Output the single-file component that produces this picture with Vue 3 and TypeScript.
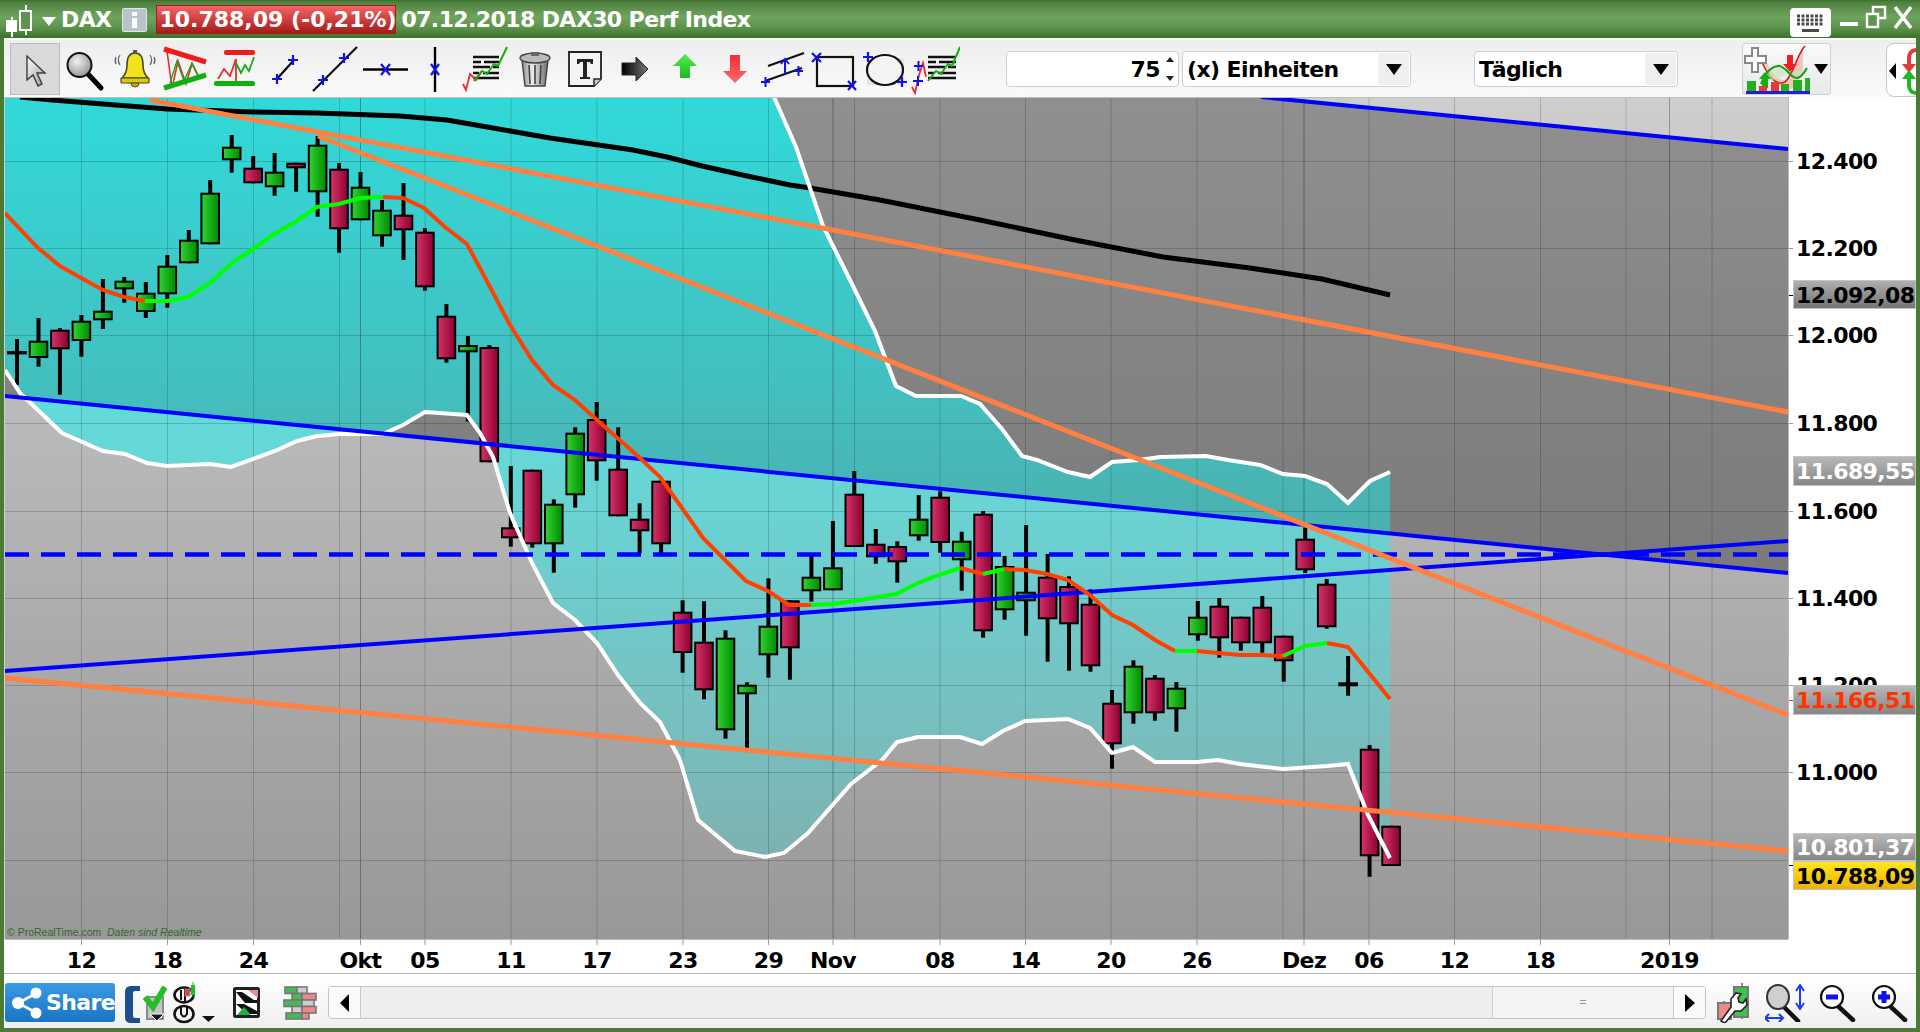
<script setup lang="ts">
type Candle = [number, number, number, number, 'g' | 'r' | 'k'];
type Seg = { color: string; pts: number[][] };

const X0 = 17;
const STEP = 21.47;

// high, body top, body bottom, low, colour
const raw: Candle[] = [
  [339, 351, 354.4, 385, 'k'], [318, 340.7, 358, 366.7, 'g'], [328, 329.7, 349.3, 394.7, 'r'], [315, 320.7, 341, 356.7, 'g'],
  [279, 310.7, 320.3, 329, 'g'], [277, 280.7, 289.3, 302.7, 'g'], [282, 292.7, 312, 318, 'g'], [255, 265.7, 294.3, 307.7, 'g'],
  [230, 239.7, 263.3, 263.3, 'g'], [180, 192.7, 244.3, 244.3, 'g'], [135, 146.7, 160.3, 172.7, 'g'], [156, 167.7, 183.3, 183.3, 'r'],
  [153, 171.7, 187.3, 195.7, 'g'], [162.7, 162.7, 168.3, 191.7, 'r'], [136, 144.7, 192.3, 216.7, 'g'], [163, 168.7, 229.3, 252.7, 'r'],
  [172, 186.7, 220.3, 220.3, 'g'], [200, 209.7, 236.3, 246.7, 'g'], [183, 214.7, 230.3, 260, 'r'], [228, 231.7, 287.3, 290.7, 'r'],
  [304, 315.7, 359.3, 362.7, 'r'], [336, 345, 352.3, 421.7, 'g'], [345, 347, 462.3, 462.3, 'r'], [466, 527.3, 538.3, 546.7, 'r'],
  [469.7, 469.7, 544.3, 547.7, 'r'], [499.3, 503.7, 544.3, 572.7, 'g'], [427.3, 432.7, 495.3, 507.7, 'g'], [402, 419, 461.3, 480.7, 'r'],
  [427.3, 468.7, 516.3, 516.3, 'r'], [503.3, 518.7, 531.3, 553.3, 'r'], [480.7, 480.7, 544.3, 553, 'r'], [600.3, 611.7, 653, 672.7, 'r'],
  [601.3, 641.7, 690.3, 699.3, 'r'], [630.3, 637.7, 730.3, 738.7, 'g'], [682.3, 684.7, 694.3, 748.3, 'g'], [578.3, 625.7, 655.3, 677.7, 'g'],
  [600.3, 600.3, 648.3, 679.7, 'r'], [556, 576.7, 591.3, 601.7, 'g'], [521, 567.3, 590.3, 590.3, 'g'], [471, 493.7, 547, 547, 'r'],
  [529, 543.7, 557.3, 563.7, 'r'], [541.3, 546, 562.3, 582.7, 'r'], [495, 518.7, 536.3, 540.7, 'g'], [491.3, 496.7, 543, 552.7, 'r'],
  [531.7, 540.7, 560.3, 590.7, 'g'], [511, 513.7, 631.3, 637.7, 'r'], [556, 566, 610.3, 619.7, 'g'], [525, 591.7, 601.3, 635.7, 'g'],
  [554, 576.7, 619.3, 661.7, 'r'], [576.3, 586, 624.3, 670.7, 'r'], [589.3, 603.7, 666.3, 671.7, 'r'], [690, 702.7, 744.3, 768.7, 'r'],
  [660.3, 665.7, 713.3, 723.7, 'g'], [675, 677.7, 713.3, 720.7, 'r'], [682, 687.7, 709.3, 731.7, 'g'], [601, 616.7, 635.3, 640.7, 'g'],
  [598, 605.7, 638.3, 657.7, 'r'], [616.7, 616.7, 643.3, 650.7, 'r'], [596, 606.7, 643.3, 652.7, 'r'], [635.7, 635.7, 661.3, 681.7, 'r'],
  [527.3, 538.7, 570.3, 573, 'r'], [579, 583.7, 627.3, 628.7, 'r'], [656, 682.3, 686.3, 695.7, 'r'], [745, 748.7, 856.3, 876.7, 'r'],
  [825.7, 825.7, 866, 866, 'r'],
];
const candles = raw.map((c, i) => ({
  x: +(X0 + STEP * i).toFixed(1), hi: c[0], top: c[1], bot: c[2], lo: c[3], kind: c[4],
}));

const upper: number[][] = [[774,97],[796,147],[823,226],[851,282],[875,331],[896,386],[916,396],[961,396],[980,404],[1002,429],[1022,456],[1037,460],[1068,472],[1090,477],[1112,462],[1139,460],[1160,457],[1206,456],[1228,460],[1260,465],[1283,474],[1305,476],[1327,484],[1348,503],[1370,481],[1390,472]];
const lower: number[][] = [[5,370],[20,393],[62,433],[103,451],[125,454],[147,463],[167,466],[210,464],[231,467],[275,451],[297,441],[317,436],[340,434],[383,434],[403,425],[425,412],[467,415],[480,433],[493,457],[510,513],[532,563],[553,603],[575,620],[597,643],[618,675],[640,703],[660,722],[680,760],[698,820],[735,851],[765,857],[784,853],[808,833],[851,784],[882,760],[897,742],[918,737],[960,737],[982,744],[1003,731],[1025,721],[1068,719],[1090,728],[1112,753],[1133,747],[1155,762],[1197,762],[1218,760],[1240,764],[1283,769],[1327,766],[1348,764],[1368,815],[1390,858]];
const str = (p: number[][]) => p.map((a) => a.join(',')).join(' ');
const upperPts = str(upper);
const lowerPts = str(lower);
const bandPts = str([[5, 97], ...upper, ...[...lower].reverse()]);
const blackPts = str([[20,97],[52,100],[167,109],[253,112],[317,113],[400,116],[447,120],[493,128],[550,138],[633,150],[667,157],[702,166],[747,176],[790,185],[810,188],[880,200],[980,220],[1075,240],[1163,257],[1250,268],[1322,279],[1390,295]]);

const R = '#ff4000';
const G = '#00ff00';
const ma: Seg[] = [
  { color: R, pts: [[5,213],[37,247],[60,266],[83,279],[103,290],[124,297],[145,301]] },
  { color: G, pts: [[145,301],[167,301],[188,297],[210,283],[232,263],[253,249],[274,234],[295,222],[317,207],[339,204],[360,198],[383,197]] },
  { color: R, pts: [[383,197],[403,198],[424,208],[445,227],[467,244],[489,285],[510,325],[532,360],[553,385],[575,400],[597,420],[640,458],[660,477],[682,508],[703,538],[725,560],[746,581],[768,591],[789,605],[811,605]] },
  { color: G, pts: [[811,605],[832,604],[854,601],[896,594],[918,583],[939,575],[960,568]] },
  { color: R, pts: [[960,568],[983,574]] },
  { color: G, pts: [[983,574],[1004,569]] },
  { color: R, pts: [[1004,569],[1025,570],[1047,574],[1068,580],[1090,595],[1112,615],[1133,625],[1155,640],[1175,651]] },
  { color: G, pts: [[1175,651],[1197,651]] },
  { color: R, pts: [[1197,651],[1218,653],[1240,655],[1261,655],[1283,656]] },
  { color: G, pts: [[1283,656],[1305,646],[1327,643]] },
  { color: R, pts: [[1327,643],[1348,647],[1390,699]] },
];
const maLines = ma.map((s) => ({ color: s.color, pts: str(s.pts) }));

const gridY = [161, 248, 335, 423, 511, 598, 685, 772, 860];
const gridX = [81.5, 167.5, 253.5, 339.5, 425, 511, 597, 683, 768.5, 854.5, 940, 1025.5, 1111, 1197, 1283, 1369, 1454.5, 1540.5, 1626, 1712];
const monthX = [360.5, 833, 1304, 1669.5];

const timeLabels: [string, number][] = [['12',81.5],['18',167.5],['24',253.5],['Okt',360.5],['05',425],['11',511],['17',597],['23',683],['29',768.5],['Nov',833],['08',940],['14',1025.5],['20',1111],['26',1197],['Dez',1304],['06',1369],['12',1454.5],['18',1540.5],['2019',1669.5]];
const priceLabels: [string, number][] = [['12.400',161],['12.200',248],['12.000',335],['11.800',423],['11.600',511],['11.400',598],['11.200',685],['11.000',772]];
const tags = [
  { text: '12.092,08', y: 280, h: 29, fill: 'url(#tagDark)', cls: 'tag-k', tick: 295, tickColor: '#000' },
  { text: '11.689,55', y: 456, h: 30, fill: 'url(#tagLight)', cls: 'tag-w', tick: 0, tickColor: '' },
  { text: '11.166,51', y: 685, h: 30, fill: 'url(#tagLight)', cls: 'tag-r', tick: 700, tickColor: '#ff3300' },
  { text: '10.801,37', y: 833, h: 28, fill: 'url(#tagLight)', cls: 'tag-w', tick: 0, tickColor: '' },
  { text: '10.788,09', y: 861, h: 29, fill: 'url(#tagYellow)', cls: 'tag-k', tick: 865, tickColor: '#000' },
];
</script>

<template>
  <div class="app">
    <header class="titlebar">
      <svg class="t-candle" width="33" height="32" viewBox="0 0 33 32">
        <path d="M7 12v20M21 0v30" stroke="#fff" stroke-width="2" />
        <rect x="1" y="15" width="11" height="12" fill="#fff" />
        <rect x="15" y="6" width="11" height="19" fill="#5e9450" stroke="#fff" stroke-width="2" />
      </svg>
      <svg class="t-drop" width="14" height="9" viewBox="0 0 14 9"><path d="M0 0h14L7 9z" fill="#fff" /></svg>
      <span class="t-sym">DAX</span>
      <svg class="t-info" width="25" height="24" viewBox="0 0 25 24">
        <rect x="0.5" y="0.5" width="24" height="23" rx="1" fill="#b9c3cc" stroke="#dfe5ea" />
        <rect x="10" y="4" width="5" height="4" fill="#fff" />
        <rect x="10" y="10" width="5" height="10" fill="#fff" />
      </svg>
      <span class="t-price">10.788,09 (-0,21%)</span>
      <span class="t-name">07.12.2018 DAX30 Perf Index</span>
      <span class="t-spacer"></span>
      <svg class="t-kbd" width="41" height="29" viewBox="0 0 41 29">
        <rect width="41" height="29" rx="4" fill="#fff" />
        <path d="M7 8h27M7 12h27M7 16h27" stroke="#4a4a4a" stroke-width="3" stroke-dasharray="3 1.5" />
        <rect x="12" y="21" width="17" height="3" fill="#4a4a4a" />
      </svg>
      <svg class="t-win" width="76" height="30" viewBox="0 0 76 30">
        <rect x="0" y="17" width="18" height="4" fill="#fff" />
        <rect x="33" y="2" width="12" height="11" fill="none" stroke="#fff" stroke-width="2.4" />
        <rect x="27" y="9" width="11" height="13" fill="#5e9450" stroke="#fff" stroke-width="2.4" />
        <path d="M55 2l16 21M71 2L55 23" stroke="#fff" stroke-width="3.6" />
      </svg>
    </header>

    <section class="toolbar">
      <div class="tools">
        <span class="tool active">
          <svg width="50" height="52" viewBox="0 0 50 52"><defs><linearGradient id="ptr" x1="0" y1="0" x2="1" y2="1"><stop offset="0" stop-color="#fff" /><stop offset="1" stop-color="#9a9a9a" /></linearGradient></defs><path d="M17 13v24l6-5 5 11 4-2-5-11h8z" fill="url(#ptr)" stroke="#3c3c3c" stroke-width="1.4" /></svg>
        </span>
        <span class="tool">
          <svg width="50" height="52" viewBox="0 0 50 52"><defs><radialGradient id="lens" cx=".4" cy=".35" r=".7"><stop offset="0" stop-color="#f2f2f2" /><stop offset="1" stop-color="#8e8e8e" /></radialGradient></defs><path d="M28 31l13 14" stroke="#000" stroke-width="5" stroke-linecap="round" /><circle cx="19.5" cy="22" r="12" fill="url(#lens)" stroke="#111" stroke-width="2" /></svg>
        </span>
        <span class="tool">
          <svg width="50" height="52" viewBox="0 0 50 52"><path d="M25 10c-6 0-8 5-8 12 0 7-2 10-5 13h26c-3-3-5-6-5-13 0-7-2-12-8-12z" fill="#f2e21c" stroke="#4a4a20" stroke-width="1.6" /><rect x="11" y="35" width="28" height="5" rx="1" fill="#d9c810" stroke="#4a4a20" stroke-width="1.2" /><path d="M21 40a4 4 0 0 0 8 0z" fill="#c8b000" stroke="#4a4a20" /><rect x="23" y="7" width="4" height="4" fill="#555" /><path d="M10 12c-2 3-2 7 0 10M6 14c-1 2-1 5 0 7M40 12c2 3 2 7 0 10M44 14c1 2 1 5 0 7" stroke="#666" stroke-width="1.3" fill="none" /></svg>
        </span>
        <span class="tool">
          <svg width="50" height="52" viewBox="0 0 50 52"><path d="M7 8l5 37 6-27 8 23 6-20 7 14" fill="none" stroke="#e03030" stroke-width="1.6" /><path d="M10 40l7-22 7 20 8-18 7 14" fill="none" stroke="#1ca81c" stroke-width="1.4" /><path d="M4 6l42 13" stroke="#ee1c1c" stroke-width="5" /><path d="M4 45l42-13" stroke="#10b010" stroke-width="5" /></svg>
        </span>
        <span class="tool">
          <svg width="50" height="52" viewBox="0 0 50 52"><path d="M8 36l6-10 6 7 6-17v24" fill="none" stroke="#e03030" stroke-width="1.8" /><path d="M26 20l5 10 4-8 4 6 5-14" fill="none" stroke="#1ca81c" stroke-width="1.8" /><rect x="14" y="7" width="31" height="5" rx="2" fill="#ee1c1c" /><rect x="4" y="38" width="41" height="5" rx="2" fill="#10b010" /></svg>
        </span>
        <span class="tool">
          <svg width="50" height="52" viewBox="0 0 50 52"><path d="M16 37l18-20" stroke="#000" stroke-width="2.2" /><path d="M12 36h10M17 31v10M28 17h10M33 12v10" stroke="#1010f0" stroke-width="2.2" /></svg>
        </span>
        <span class="tool">
          <svg width="50" height="52" viewBox="0 0 50 52"><path d="M3 48L47 4" stroke="#000" stroke-width="2.2" /><path d="M8 37h10M13 32v10M29 15h10M34 10v10" stroke="#1010f0" stroke-width="2.2" /></svg>
        </span>
        <span class="tool">
          <svg width="50" height="52" viewBox="0 0 50 52"><path d="M3 26.500h45" stroke="#000" stroke-width="2.4" /><path d="M21 21l9 11M30 21l-9 11" stroke="#1010f0" stroke-width="2.2" /></svg>
        </span>
        <span class="tool">
          <svg width="50" height="52" viewBox="0 0 50 52"><path d="M25 4v45" stroke="#000" stroke-width="2.4" /><path d="M21 21l8 11M29 21l-8 11" stroke="#1010f0" stroke-width="2.2" /></svg>
        </span>
        <span class="tool">
          <svg width="50" height="52" viewBox="0 0 50 52"><path d="M13 14h26M13 19h8M24 19h15M13 24h17M33 24h6M13 30h6M23 30h16M13 35h26" stroke="#111" stroke-width="2.6" /><path d="M3 41l3 6 4-16 6 6 6-9" fill="none" stroke="#e03030" stroke-width="1.8" /><path d="M14 38l8-10 5 3 7-10 4 2 9-19" fill="none" stroke="#10b010" stroke-width="2" /></svg>
        </span>
        <span class="tool">
          <svg width="50" height="52" viewBox="0 0 50 52"><defs><linearGradient id="can" x1="0" y1="0" x2="1" y2="0"><stop offset="0" stop-color="#8a8a8a" /><stop offset=".4" stop-color="#ececec" /><stop offset="1" stop-color="#6a6a6a" /></linearGradient></defs><path d="M12 17h26l-3 26H15z" fill="url(#can)" stroke="#444" stroke-width="1.4" /><ellipse cx="25" cy="15" rx="15" ry="5" fill="#bbb" stroke="#444" stroke-width="1.4" /><rect x="21" y="9" width="8" height="4" fill="#666" /><path d="M19 22l1 19M25 22v19M31 22l-1 19" stroke="#444" stroke-width="1.6" /></svg>
        </span>
        <span class="tool">
          <svg width="50" height="52" viewBox="0 0 50 52"><path d="M9 9h32v27l-7 7H9z" fill="#f4f4f4" stroke="#222" stroke-width="1.8" /><path d="M34 43v-7h7" fill="#ccc" stroke="#222" stroke-width="1.4" /><path d="M17 16h16v5h-2l-1-2h-3v15h3v2h-10v-2h3V19h-3l-1 2h-2z" fill="#222" /></svg>
        </span>
        <span class="tool">
          <svg width="50" height="52" viewBox="0 0 50 52"><defs><linearGradient id="arw" x1="0" y1="0" x2="1" y2="0"><stop offset="0" stop-color="#000" /><stop offset="1" stop-color="#777" /></linearGradient></defs><path d="M12 20h14v-6l12 12-12 12v-6H12z" fill="url(#arw)" stroke="#222" /></svg>
        </span>
        <span class="tool">
          <svg width="50" height="52" viewBox="0 0 50 52"><defs><linearGradient id="upg" x1="0" y1="0" x2="0" y2="1"><stop offset="0" stop-color="#4cf04c" /><stop offset="1" stop-color="#1fb81f" /></linearGradient></defs><path d="M25 11l12 12h-7v12H20V23h-7z" fill="url(#upg)" /></svg>
        </span>
        <span class="tool">
          <svg width="50" height="52" viewBox="0 0 50 52"><defs><linearGradient id="dng" x1="0" y1="0" x2="0" y2="1"><stop offset="0" stop-color="#f03030" /><stop offset="1" stop-color="#ff6a6a" /></linearGradient></defs><path d="M20 12h10v16h7L25 40 13 28h7z" fill="url(#dng)" /></svg>
        </span>
        <span class="tool">
          <svg width="50" height="52" viewBox="0 0 50 52"><path d="M8 23l36-13M5 38l37-13" stroke="#111" stroke-width="2.2" /><path d="M25 31V17M21 21l4-5 4 5" stroke="#1010f0" stroke-width="2" fill="none" /><path d="M1 39h9M5.500 34v10M34 28h9M38.500 23v10" stroke="#1010f0" stroke-width="2" /></svg>
        </span>
        <span class="tool">
          <svg width="50" height="52" viewBox="0 0 50 52"><rect x="7" y="14" width="36" height="29" fill="none" stroke="#111" stroke-width="2.2" /><path d="M2 10l9 9M11 10l-9 9M38 38l8 9M46 38l-8 9" stroke="#1010f0" stroke-width="2.2" /></svg>
        </span>
        <span class="tool">
          <svg width="50" height="52" viewBox="0 0 50 52"><rect x="7" y="15" width="37" height="27" fill="#e6e6e6" /><ellipse cx="25" cy="27" rx="18" ry="15" fill="#fff" fill-opacity=".5" stroke="#111" stroke-width="2.2" /><path d="M3 14h10M8 9v10M37 39h10M42 34v10" stroke="#1010f0" stroke-width="2.2" /></svg>
        </span>
        <span class="tool">
          <svg width="50" height="52" viewBox="0 0 50 52"><path d="M18 14h28M18 19h8M29 19h17M18 24h17M38 24h8M18 30h6M28 30h18M18 35h28" stroke="#111" stroke-width="2.6" /><path d="M2 44l3 6 4-18 4-12 3 14" fill="none" stroke="#e03030" stroke-width="1.8" /><path d="M18 38l8-10 5 3 7-10 4 2 8-19" fill="none" stroke="#10b010" stroke-width="2" /><path d="M3 38h10M8 33v10M4 23h9M8.500 18v10" stroke="#1010f0" stroke-width="2" /></svg>
        </span>
      </div>

      <div class="spinner">
        <span class="spin-value">75</span>
        <svg width="10" height="30" viewBox="0 0 10 30"><path d="M1 8l4-5 4 5zM1 22l4 5 4-5z" fill="#222" /></svg>
      </div>
      <div class="combo units"><span>(x) Einheiten</span><b class="caret"><i></i></b></div>
      <div class="combo daily"><span>Täglich</span><b class="caret"><i></i></b></div>

      <div class="indi">
        <svg width="68" height="52" viewBox="0 0 68 52">
          <path d="M20 10c6 14 12 26 20 26s10-8 14-22l6-12v22c-4 14-10 22-16 22-10 0-18-14-24-30z" fill="#f3c4bc" />
          <path d="M4 14c8-2 10-4 16 6 6 14 14 22 22 18 8-6 12-28 20-36" fill="none" stroke="#c82020" stroke-width="1.6" />
          <path d="M18 40c4-10 10-18 18-18s14 18 22 10c2-2 4-4 6-8" fill="#bfe6b0" fill-opacity=".6" stroke="#10a010" stroke-width="2" />
          <path d="M9 4h6v8h8v7h-8v9H9v-9H2v-7h7z" fill="#fff" stroke="#888" stroke-width="2" />
          <path d="M44 11h6v9h4l-7 8-7-8h4z" fill="#ee2020" />
          <path d="M22 28l6 7h-3v9h-6v-9h-3z" fill="#10b010" />
          <path d="M4 37h9v10H4zM38 40h8v7h-8zM50 36h9v11h-9zM62 34h5v13h-5z" fill="#22b022" />
          <path d="M16 42h8v5h-8zM28 38h8v9h-8z" fill="#e03a3a" />
          <rect x="3" y="47" width="64" height="3" fill="#2020d0" />
        </svg>
        <span class="indi-drop"><svg width="14" height="10" viewBox="0 0 14 10"><path d="M0 0h14L7 10z" fill="#000" /></svg></span>
      </div>

      <div class="swap">
        <svg width="30" height="54" viewBox="0 0 30 54">
          <path d="M22 24V14c0-5 3-8 7-8" fill="none" stroke="#e03a3a" stroke-width="4" />
          <path d="M15 20h14l-7 9z" fill="#e03a3a" />
          <path d="M22 32v9c0 5 3 8 7 8" fill="none" stroke="#1fb81f" stroke-width="4" />
          <path d="M15 35h14l-7-9z" fill="#1fb81f" />
          <path d="M2 27l7-8v16z" fill="#000" />
        </svg>
      </div>
    </section>

    <svg class="chart" width="1912" height="877" viewBox="4 97 1912 877">
      <defs>
        <linearGradient id="bg" x1="0" y1="97" x2="0" y2="940" gradientUnits="userSpaceOnUse"><stop offset="0" stop-color="#cecece" /><stop offset="1" stop-color="#989898" /></linearGradient>
        <linearGradient id="band" x1="0" y1="97" x2="0" y2="858" gradientUnits="userSpaceOnUse"><stop offset="0" stop-color="#00ffff" stop-opacity=".66" /><stop offset="1" stop-color="#00ffff" stop-opacity=".2" /></linearGradient>
        <linearGradient id="cg" x1="0" y1="0" x2="1" y2="0"><stop offset="0" stop-color="#32d332" /><stop offset="1" stop-color="#008a00" /></linearGradient>
        <linearGradient id="cr" x1="0" y1="0" x2="1" y2="0"><stop offset="0" stop-color="#d63468" /><stop offset="1" stop-color="#8c0030" /></linearGradient>
        <linearGradient id="tagDark" x1="0" y1="0" x2="0" y2="1"><stop offset="0" stop-color="#b0b0b0" /><stop offset="1" stop-color="#747474" /></linearGradient>
        <linearGradient id="tagLight" x1="0" y1="0" x2="0" y2="1"><stop offset="0" stop-color="#b8b8b8" /><stop offset="1" stop-color="#858585" /></linearGradient>
        <linearGradient id="tagYellow" x1="0" y1="0" x2="0" y2="1"><stop offset="0" stop-color="#ffe81e" /><stop offset="1" stop-color="#eeb000" /></linearGradient>
        <clipPath id="plot"><rect x="5" y="97" width="1783" height="842" /></clipPath>
      </defs>

      <rect x="4" y="97" width="1912" height="877" fill="#fff" />

      <g clip-path="url(#plot)">
        <rect x="5" y="97" width="1783" height="842" fill="url(#bg)" />
        <polygon points="5,97 1261,97 1788,149 1788,573 5,397" fill="#000" fill-opacity=".3" />
        <polygon :points="bandPts" fill="url(#band)" />

        <g stroke="#000" stroke-opacity=".17" stroke-width="1">
          <line v-for="y in gridY" :key="'gy' + y" x1="5" x2="1788" :y1="y + 0.5" :y2="y + 0.5" />
          <line v-for="x in gridX" :key="'gx' + x" :x1="x" :x2="x" y1="97" y2="939" />
          <line v-for="x in monthX" :key="'mx' + x" :x1="x" :x2="x" y1="97" y2="939" stroke-opacity=".3" />
        </g>

        <g v-for="c in candles" :key="c.x">
          <line :x1="c.x" :x2="c.x" :y1="c.hi" :y2="c.lo" stroke="#000" stroke-width="4" />
          <rect
            :x="c.x - 8.8"
            :y="c.top + 1"
            width="17.6"
            :height="c.bot - c.top - 2"
            :fill="c.kind === 'g' ? 'url(#cg)' : c.kind === 'r' ? 'url(#cr)' : '#000'"
            stroke="#000"
            stroke-width="2"
          />
        </g>

        <polyline :points="blackPts" fill="none" stroke="#000" stroke-width="5" />
        <polyline :points="upperPts" fill="none" stroke="#fff" stroke-width="4" />
        <polyline :points="lowerPts" fill="none" stroke="#fff" stroke-width="4" />

        <line x1="1261" y1="97" x2="1788" y2="149" stroke="#0000ff" stroke-width="4" />
        <line x1="5" y1="396" x2="1788" y2="573" stroke="#0000ff" stroke-width="4" />
        <line x1="5" y1="671" x2="1788" y2="541" stroke="#0000ff" stroke-width="4" />
        <line x1="5" y1="554.500" x2="1788" y2="554.500" stroke="#0000ff" stroke-width="4.500" stroke-dasharray="24 12" />

        <line x1="150" y1="100" x2="1788" y2="412" stroke="#ff8040" stroke-width="5" />
        <line x1="318" y1="136" x2="1788" y2="715" stroke="#ff8040" stroke-width="5" />
        <line x1="5" y1="678" x2="1788" y2="851" stroke="#ff8040" stroke-width="5" />

        <polyline v-for="(m, i) in maLines" :key="'ma' + i" :points="m.pts" fill="none" :stroke="m.color" stroke-width="4" />

        <text class="copy" x="7" y="936">© ProRealTime.com</text>
        <text class="copy italic" x="107" y="936">Daten sind Realtime</text>
      </g>

      <line x1="5" x2="1788" y1="97.500" y2="97.500" stroke="#bdbdbd" />
      <line x1="4.500" x2="4.500" y1="97" y2="939" stroke="#cfcfcf" />
      <line x1="1788.500" x2="1788.500" y1="97" y2="939" stroke="#bdbdbd" />
      <line x1="5" x2="1788" y1="939.500" y2="939.500" stroke="#bdbdbd" />
      <line x1="4" x2="1916" y1="973.500" y2="973.500" stroke="#b8b8b8" />

      <g stroke="#9a9a9a">
        <line v-for="p in priceLabels" :key="'t' + p[0]" x1="1789" x2="1793" :y1="p[1] + 0.5" :y2="p[1] + 0.5" />
        <line v-for="t in timeLabels" :key="'b' + t[1]" :x1="t[1]" :x2="t[1]" y1="940" y2="945" />
      </g>

      <text v-for="p in priceLabels" :key="p[0]" class="axis" x="1796" :y="p[1] + 8">{{ p[0] }}</text>

      <g v-for="t in tags" :key="t.text">
        <line v-if="t.tick" x1="1789" x2="1793" :y1="t.tick + 0.5" :y2="t.tick + 0.5" :stroke="t.tickColor" />
        <rect x="1793.500" :y="t.y + 0.5" width="122" :height="t.h - 1" :fill="t.fill" stroke="#c4c4c4" />
        <text class="axis" :class="t.cls" x="1796" :y="t.y + t.h / 2 + 8">{{ t.text }}</text>
      </g>

      <text v-for="t in timeLabels" :key="t[0] + t[1]" class="axis" :x="t[1]" y="968" text-anchor="middle">{{ t[0] }}</text>
    </svg>

    <footer class="bottombar">
      <div class="share">
        <svg width="34" height="34" viewBox="0 0 34 34">
          <path d="M25 8L8 17l17 9" stroke="#fff" stroke-width="2.6" fill="none" />
          <circle cx="26" cy="7" r="5.500" fill="#fff" /><circle cx="8" cy="17" r="6" fill="#fff" /><circle cx="26" cy="27" r="5.500" fill="#fff" />
        </svg>
        <span>Share</span>
      </div>

      <svg class="b-list" width="42" height="40" viewBox="0 0 42 40">
        <path d="M15 3H6Q0 3 0 9v25q0 6 6 6h9v-5H10q-2 0-2-2V10q0-2 2-2h5z" fill="#1d4f8f" />
        <rect x="22" y="14" width="16" height="22" fill="#c4c4c4" stroke="#8a8a8a" stroke-width="2" />
        <path d="M25 31h14l-7 7z" fill="#1a1a1a" stroke="#fff" stroke-width="1" />
        <path d="M20 14l8 10L40 4" fill="none" stroke="#22c022" stroke-width="6" />
      </svg>
      <svg class="b-clip" width="44" height="42" viewBox="0 0 44 42">
        <ellipse cx="11" cy="13" rx="9.500" ry="7.500" fill="none" stroke="#111" stroke-width="2.6" />
        <path d="M12 6v14M8 8v10" stroke="#111" stroke-width="2" />
        <rect x="12" y="7" width="5" height="7" fill="#e04040" stroke="#999" stroke-width=".8" />
        <rect x="18" y="3" width="4" height="10" fill="#22c022" />
        <path d="M20 0v15" stroke="#22c022" stroke-width="1" />
        <ellipse cx="11" cy="32" rx="9.500" ry="8" fill="none" stroke="#111" stroke-width="2.600" />
        <path d="M8 24v8q3 5 6 0v-8" fill="none" stroke="#111" stroke-width="2" />
        <path d="M29 34h13l-6.500 6z" fill="#111" />
      </svg>
      <svg class="b-doc" width="27" height="31" viewBox="0 0 27 31">
        <rect x="1.500" y="1.500" width="24" height="28" rx="1" fill="#fff" stroke="#222" stroke-width="3" />
        <path d="M3 5h6l12 8h3v3H12zM3 17h8l13 7v3H14z" fill="#111" />
        <path d="M15 3h10v8z" fill="#ee8a8a" />
        <path d="M4 28l7-8 7 8z" fill="#22b040" />
      </svg>
      <svg class="b-bars" width="34" height="34" viewBox="0 0 34 34">
        <g stroke="#777" stroke-width="1.600">
          <rect x="2" y="1" width="12" height="6.500" fill="#44bb55" /><rect x="14" y="1" width="10" height="6.500" fill="#cfcfcf" />
          <rect x="9" y="7.500" width="10" height="6.500" fill="#44bb55" /><rect x="19" y="7.500" width="14" height="6.500" fill="#ee8888" />
          <rect x="1" y="14" width="18" height="6.500" fill="#44bb55" /><rect x="19" y="14" width="12" height="6.500" fill="#cfcfcf" />
          <rect x="9" y="20.500" width="10" height="6.500" fill="#cfcfcf" /><rect x="19" y="20.500" width="14" height="6.500" fill="#ee8888" />
          <rect x="3" y="27" width="16" height="6" fill="#44bb55" /><rect x="19" y="27" width="7" height="6" fill="#ee8888" />
        </g>
      </svg>

      <div class="scroll">
        <span class="sbtn"><i class="tri-left"></i></span>
        <span class="strack"></span>
        <span class="sthumb"><em></em></span>
        <span class="sbtn"><i class="tri-right"></i></span>
      </div>

      <svg class="b-wrench" width="32" height="40" viewBox="0 0 32 40">
        <path d="M7 18v22M25 0v36" stroke="#8a8a8a" stroke-width="2" />
        <rect x="1" y="20" width="13" height="16" fill="#f08a8a" stroke="#777" stroke-width="2" />
        <rect x="17" y="4" width="14" height="30" fill="#3cc34c" stroke="#777" stroke-width="2" />
        <path d="M4 38l10-14v-8l5-6 5 1-3 4 1 4 4 1 3-4 1 6-6 6h-6L8 40z" fill="#fff" stroke="#222" stroke-width="1.6" />
      </svg>
      <svg class="b-zoomxy" width="42" height="38" viewBox="0 0 42 38">
        <path d="M20 24l13 13" stroke="#111" stroke-width="4.500" stroke-linecap="round" />
        <ellipse cx="13" cy="13" rx="11" ry="12" fill="#cfcfcf" stroke="#333" stroke-width="2" />
        <path d="M35 2v22M31 7l4-6 4 6M31 19l4 6 4-6M0 34h18M4 30l-4 4 4 4M14 30l4 4-4 4" fill="none" stroke="#1a3cff" stroke-width="2" />
      </svg>
      <svg class="b-zoom" width="36" height="38" viewBox="0 0 36 38">
        <path d="M19 23l14 13" stroke="#111" stroke-width="4.500" stroke-linecap="round" />
        <circle cx="12" cy="13" r="11" fill="#fff" stroke="#111" stroke-width="2.2" />
        <rect x="6" y="10.500" width="12" height="5" fill="#1010f0" />
      </svg>
      <svg class="b-zoomp" width="36" height="38" viewBox="0 0 36 38">
        <path d="M19 23l14 13" stroke="#111" stroke-width="4.500" stroke-linecap="round" />
        <circle cx="12" cy="13" r="11" fill="#fff" stroke="#111" stroke-width="2.2" />
        <path d="M6 10.500h3.500V7h5v3.500H18v5h-3.500V19h-5v-3.500H6z" fill="#1010f0" />
      </svg>
    </footer>
  </div>
</template>

<style scoped>
.app {
  width: 1920px;
  height: 1032px;
  display: flex;
  flex-direction: column;
  overflow: hidden;
  background: #4a7a36;
  font-family: "DejaVu Sans", "Liberation Sans", sans-serif;
  font-weight: 700;
  color: #000;
}

.titlebar {
  height: 38px;
  flex: none;
  display: flex;
  align-items: center;
  box-sizing: border-box;
  padding-left: 5px;
  color: #fff;
  font-size: 22px;
  letter-spacing: -0.6px;
  background: linear-gradient(#3d6e2c 0, #4f8140 6%, #6fa45e 45%, #5a9148 75%, #3b7229 100%);
}
.t-candle { flex: none; margin-top: 4px; }
.t-drop { flex: none; margin-left: 4px; margin-top: 4px; }
.t-sym { margin-left: 5px; }
.t-info { flex: none; margin-left: 11px; margin-top: 2px; }
.t-price {
  margin-left: 9px;
  height: 29px;
  box-sizing: border-box;
  width: 240px;
  padding-left: 2px;
  line-height: 27px;
  letter-spacing: 0;
  white-space: nowrap;
  background: linear-gradient(#f46464, #a81a1a);
  border: 1px solid #a02020;
}
.t-name { margin-left: 5px; white-space: nowrap; }
.t-spacer { flex: 1; }
.t-kbd { flex: none; margin-top: 7px; }
.t-win { flex: none; margin: 2px 4px 0 9px; }

.toolbar {
  height: 59px;
  flex: none;
  margin: 0 4px;
  box-sizing: border-box;
  border-top: 2px solid #fafafa;
  display: flex;
  align-items: flex-start;
  padding-top: 3px;
  overflow: hidden;
  background: linear-gradient(#eeeeee, #fafafa);
}
.tools { display: flex; margin-left: 6px; flex: none; }
.tool { width: 50px; height: 52px; flex: none; display: block; box-sizing: border-box; }
.tool svg { display: block; }
.tool.active { background: #d9d9d9; box-shadow: inset 0 0 0 1px #bdbdbd; }

.spinner {
  width: 173px;
  height: 36px;
  margin: 8px 0 0 46px;
  flex: none;
  box-sizing: border-box;
  display: flex;
  align-items: center;
  justify-content: flex-end;
  padding-right: 3px;
  gap: 5px;
  background: #fff;
  border: 1px solid #cfcfcf;
  border-radius: 4px;
  font-size: 22px;
  letter-spacing: -0.6px;
}
.combo {
  height: 36px;
  margin-top: 8px;
  flex: none;
  box-sizing: border-box;
  display: flex;
  align-items: center;
  justify-content: space-between;
  padding: 0 1px 0 4px;
  background: #fff;
  border: 1px solid #cfcfcf;
  border-radius: 4px;
  font-size: 22px;
  letter-spacing: -0.6px;
  white-space: nowrap;
}
.units { width: 229px; margin-left: 3px; }
.daily { width: 204px; margin-left: 63px; }
.caret {
  width: 31px;
  height: 32px;
  display: flex;
  align-items: center;
  justify-content: center;
  background: #efefef;
  border-radius: 3px;
}
.caret i {
  width: 0;
  height: 0;
  border-left: 8px solid transparent;
  border-right: 8px solid transparent;
  border-top: 11px solid #000;
}
.indi {
  margin-left: 64px;
  width: 89px;
  height: 52px;
  flex: none;
  display: flex;
  box-sizing: border-box;
  background: linear-gradient(#fafafa, #e8e8e8);
  border: 1px solid #d0d0d0;
  border-radius: 3px;
}
.indi svg { display: block; flex: none; }
.indi-drop { flex: 1; display: flex; align-items: center; justify-content: center; }
.swap {
  margin-left: 55px;
  width: 40px;
  height: 54px;
  flex: none;
  background: #fff;
  border: 1px solid #c8c8c8;
  border-radius: 8px 0 0 8px;
  box-sizing: border-box;
}
.swap svg { display: block; }

.chart { display: block; flex: none; margin: 0 4px; }
.axis { font: 700 22px "DejaVu Sans", "Liberation Sans", sans-serif; letter-spacing: -0.6px; fill: #000; }
.tag-k { fill: #000; }
.tag-w { fill: #fff; }
.tag-r { fill: #ff3300; }
.copy { font: 400 10.5px "Liberation Sans", Arial, sans-serif; fill: #2f6a2a; }
.italic { font-style: italic; }

.bottombar {
  height: 54px;
  flex: none;
  margin: 0 4px 4px;
  box-sizing: border-box;
  display: flex;
  align-items: center;
  padding: 3px 0 0 1px;
  background: linear-gradient(#ffffff, #f0f0f0);
}
.share {
  width: 110px;
  height: 39px;
  flex: none;
  display: flex;
  align-items: center;
  gap: 2px;
  padding-left: 5px;
  box-sizing: border-box;
  border-radius: 3px;
  background: linear-gradient(#3a9be2, #1b74c4);
  color: #fff;
  font-size: 22px;
  letter-spacing: -0.6px;
}
.share svg { flex: none; }
.b-list { flex: none; margin-left: 10px; }
.b-clip { flex: none; margin-left: 6px; }
.b-doc { flex: none; margin-left: 16px; }
.b-bars { flex: none; margin-left: 23px; }
.scroll {
  width: 1378px;
  height: 33px;
  margin-left: 11px;
  flex: none;
  display: flex;
  box-sizing: border-box;
  border: 1px solid #c4c4c4;
  border-radius: 4px;
  background: #eeeeee;
  overflow: hidden;
}
.sbtn {
  width: 32px;
  flex: none;
  display: flex;
  align-items: center;
  justify-content: center;
  background: #fafafa;
  border-right: 1px solid #c8c8c8;
  box-sizing: border-box;
}
.sbtn:last-child { border-right: 0; border-left: 1px solid #c8c8c8; }
.strack { flex: 1; }
.sthumb {
  width: 181px;
  flex: none;
  display: flex;
  align-items: center;
  justify-content: center;
  background: #f4f4f4;
  border-left: 1px solid #d0d0d0;
  box-sizing: border-box;
}
.sthumb em {
  width: 6px;
  height: 6px;
  background: repeating-linear-gradient(#999 0 1px, transparent 1px 3px);
}
.tri-left, .tri-right { width: 0; height: 0; border-top: 9px solid transparent; border-bottom: 9px solid transparent; }
.tri-left { border-right: 9px solid #000; }
.tri-right { border-left: 10px solid #000; }
.b-wrench { flex: none; margin-left: 11px; }
.b-zoomxy { flex: none; margin-left: 16px; }
.b-zoom { flex: none; margin-left: 13px; }
.b-zoomp { flex: none; margin-left: 16px; }
</style>

<style>
html, body { margin: 0; padding: 0; background: #4a7a36; }
</style>
